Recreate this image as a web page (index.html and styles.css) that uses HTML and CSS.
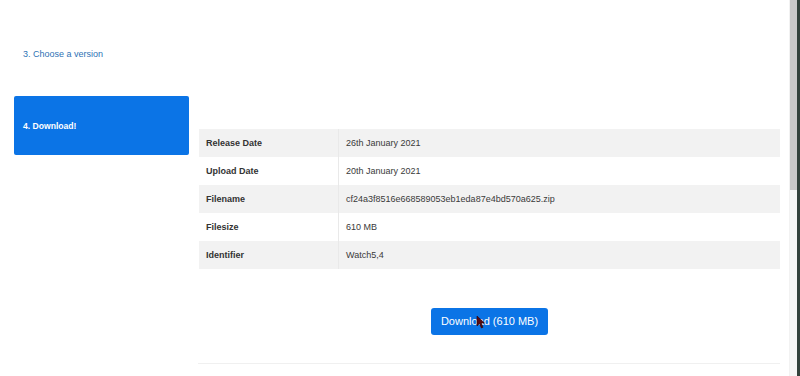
FILE: index.html
```html
<!DOCTYPE html>
<html lang="en">
<head>
    <meta charset="UTF-8">
    <meta name="viewport" content="width=device-width, initial-scale=1.0">
    <title>Download firmware</title>
    <link rel="stylesheet" href="styles.css">
</head>
<body>

<div class="page">
    <div class="content">
        <ul class="steps">
            <li class="step"><a href="#">3. Choose a version</a></li>
            <li class="step active">4. Download!</li>
        </ul>

        <div class="main">
            <table class="info-table">
                <tr>
                    <th>Release Date</th>
                    <td>26th January 2021</td>
                </tr>
                <tr>
                    <th>Upload Date</th>
                    <td>20th January 2021</td>
                </tr>
                <tr>
                    <th>Filename</th>
                    <td>cf24a3f8516e668589053eb1eda87e4bd570a625.zip</td>
                </tr>
                <tr>
                    <th>Filesize</th>
                    <td>610 MB</td>
                </tr>
                <tr>
                    <th>Identifier</th>
                    <td>Watch5,4</td>
                </tr>
            </table>

            <div class="download-row">
                <a href="#" class="download-btn">Download (610 MB)
                    <svg class="cursor" width="9" height="14" viewBox="0 0 9 14">
                        <path d="M1 1 L1 11 L3.5 8.6 L5.4 13 L7 12.3 L5.2 8 L8.4 8 Z" fill="#5a0a10" stroke="#2a0206" stroke-width="0.6"/>
                    </svg>
                </a>
            </div>

            <hr class="divider">
        </div>
    </div>

    <div class="scrollbar">
        <div class="scroll-track"><div class="scroll-thumb"></div></div>
        <div class="scroll-edge"></div>
    </div>
</div>

</body>
</html>
```

FILE: styles.css
```css
body {
    margin: 0;
    padding: 0;
    font-family: 'Liberation Sans', Arial, sans-serif;
    background: #fff;
    color: #333;
    overflow: hidden;
}

.page {
    display: flex;
    height: 376px;
}

.content {
    flex: 1;
    display: flex;
    padding-left: 14px;
}

/* Left step list */
.steps {
    list-style: none;
    margin: 0;
    padding: 40px 0 0 0;
    width: 175px;
    display: flex;
    flex-direction: column;
    gap: 29px;
}

.step {
    display: flex;
    align-items: center;
    height: 27px;
    padding: 0 9px;
    font-size: 9px;
}

.step a {
    color: #2f72b5;
    text-decoration: none;
}

.step.active {
    height: 59px;
    background-color: #0b74e6;
    border-radius: 2px;
    color: #fff;
    font-weight: bold;
    font-size: 8.6px;
}

/* Details */
.main {
    width: 581px;
    margin-left: 10px;
    padding-top: 129px;
}

.info-table {
    width: 100%;
    border-collapse: collapse;
    font-size: 9px;
}

.info-table th,
.info-table td {
    height: 28px;
    padding: 0 7px;
    text-align: left;
    vertical-align: middle;
}

.info-table th {
    width: 125px;
    font-weight: bold;
    color: #333;
    border-right: 1px solid #e9e9e9;
}

.info-table td {
    color: #3a3a3a;
}

.info-table tr:nth-child(odd) {
    background-color: #f2f2f2;
}

.download-row {
    display: flex;
    justify-content: center;
    padding-top: 39px;
}

.download-btn {
    position: relative;
    display: block;
    height: 27px;
    line-height: 27px;
    padding: 0 10px;
    background-color: #0b74e6;
    border-radius: 3px;
    color: #fff;
    font-size: 11px;
    text-decoration: none;
}

.download-btn .cursor {
    position: absolute;
    left: 45px;
    top: 7px;
}

.divider {
    margin: 28px 0 0 -1px;
    border: none;
    border-top: 1px solid #f0f0f0;
}

/* Window scrollbar */
.scrollbar {
    width: 10px;
    display: flex;
    border-left: 1px solid #f2f2f2;
}

.scroll-track {
    flex: 1;
    background: #f7f7f7;
}

.scroll-thumb {
    height: 190px;
    background: #cacaca;
}

.scroll-edge {
    width: 3px;
    background: #34433d;
}
```
